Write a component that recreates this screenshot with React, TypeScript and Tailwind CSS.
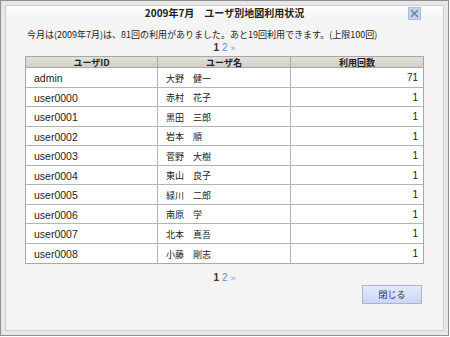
import * as React from "react"

const rows = [
  { id: "admin", name: "大野　健一", count: 71 },
  { id: "user0000", name: "赤村　花子", count: 1 },
  { id: "user0001", name: "黒田　三郎", count: 1 },
  { id: "user0002", name: "岩本　順", count: 1 },
  { id: "user0003", name: "菅野　大樹", count: 1 },
  { id: "user0004", name: "東山　良子", count: 1 },
  { id: "user0005", name: "緑川　二郎", count: 1 },
  { id: "user0006", name: "南原　学", count: 1 },
  { id: "user0007", name: "北本　真吾", count: 1 },
  { id: "user0008", name: "小藤　剛志", count: 1 },
]

const jp = "font-['Noto_Sans_CJK_JP',sans-serif]"
const latin = "font-['Liberation_Sans','Noto_Sans_CJK_JP',sans-serif]"

function Pager() {
  return (
    <div className={`flex justify-center gap-[3px] text-[10px] leading-none ${latin}`}>
      <span className="font-bold text-[#333]">1</span>
      <span className="text-[#5b8fd6]">2</span>
      <span className="text-[#7aa3dd] text-[9px] self-center">»</span>
    </div>
  )
}

export default function App() {
  return (
    <div className="w-[450px] h-[337px] bg-white">
      <div className="w-[449px] h-[336px] border border-[#8f8f8f] bg-[#e7e7e7] p-[4px]">
        <div className="h-full border border-[#cfcfcf] bg-[#f4f4f4] flex flex-col">
          {/* Title bar */}
          <div className="relative h-[14px] bg-linear-to-b from-[#fbfcfe] to-[#f3f4f6] flex items-center justify-center">
            <span className={`text-[10px] font-bold text-[#222] leading-none ${jp}`}>
              2009年7月　ユーザ別地図利用状況
            </span>
            <div className="absolute right-[22px] top-[1px] w-[13px] h-[13px] bg-[#c4d2ec] border border-[#aebfdd] flex items-center justify-center">
              <svg width="9" height="9" viewBox="0 0 9 9">
                <path d="M1 1 L8 8 M8 1 L1 8" stroke="#6a7d99" strokeWidth="1.4" />
              </svg>
            </div>
          </div>

          {/* Message */}
          <div className={`mt-[10px] pl-[21px] text-[9px] leading-none text-[#222] ${jp}`}>
            今月は(2009年7月)は、81回の利用がありました。あと19回利用できます。(上限100回)
          </div>
          <div className="mt-[4px]">
            <Pager />
          </div>

          {/* Table */}
          <div className="mt-[3px] mx-[19px] border border-[#a8a8a8]">
            <div className="grid grid-cols-[132px_133px_1fr] h-[11px] bg-linear-to-b from-[#e2e0da] to-[#d2cfc8] border-b border-[#a8a8a8]">
              <div className={`flex items-center justify-center text-[9px] font-bold text-[#222] border-r border-[#a8a8a8] leading-none ${jp}`}>ユーザID</div>
              <div className={`flex items-center justify-center text-[9px] font-bold text-[#222] border-r border-[#a8a8a8] leading-none ${jp}`}>ユーザ名</div>
              <div className={`flex items-center justify-center text-[9px] font-bold text-[#222] leading-none ${jp}`}>利用回数</div>
            </div>
            {rows.map((r, i) => (
              <div
                key={r.id}
                className={`grid grid-cols-[132px_133px_1fr] h-[19.5px] bg-white ${i < rows.length - 1 ? "border-b border-[#b4b4b4]" : ""}`}
              >
                <div className={`flex items-center pl-[8px] pt-[2px] text-[10.5px] leading-none text-[#222] border-r border-[#b4b4b4] ${latin}`}>{r.id}</div>
                <div className={`flex items-center pl-[8px] pt-[2px] text-[9px] leading-none text-[#222] border-r border-[#b4b4b4] ${jp}`}>{r.name}</div>
                <div className={`flex items-center justify-end pr-[5px] pt-[2px] text-[10px] leading-none text-[#222] ${latin}`}>{r.count}</div>
              </div>
            ))}
          </div>

          <div className="mt-[9px]">
            <Pager />
          </div>

          <div className="flex justify-end pr-[21px] mt-[2px]">
            <button className={`w-[60px] h-[19px] border border-[#a9b6cf] bg-linear-to-b from-[#e3eafc] to-[#c9d6f6] text-[9px] text-[#333] leading-none ${jp}`}>
              閉じる
            </button>
          </div>
        </div>
      </div>
    </div>
  )
}
